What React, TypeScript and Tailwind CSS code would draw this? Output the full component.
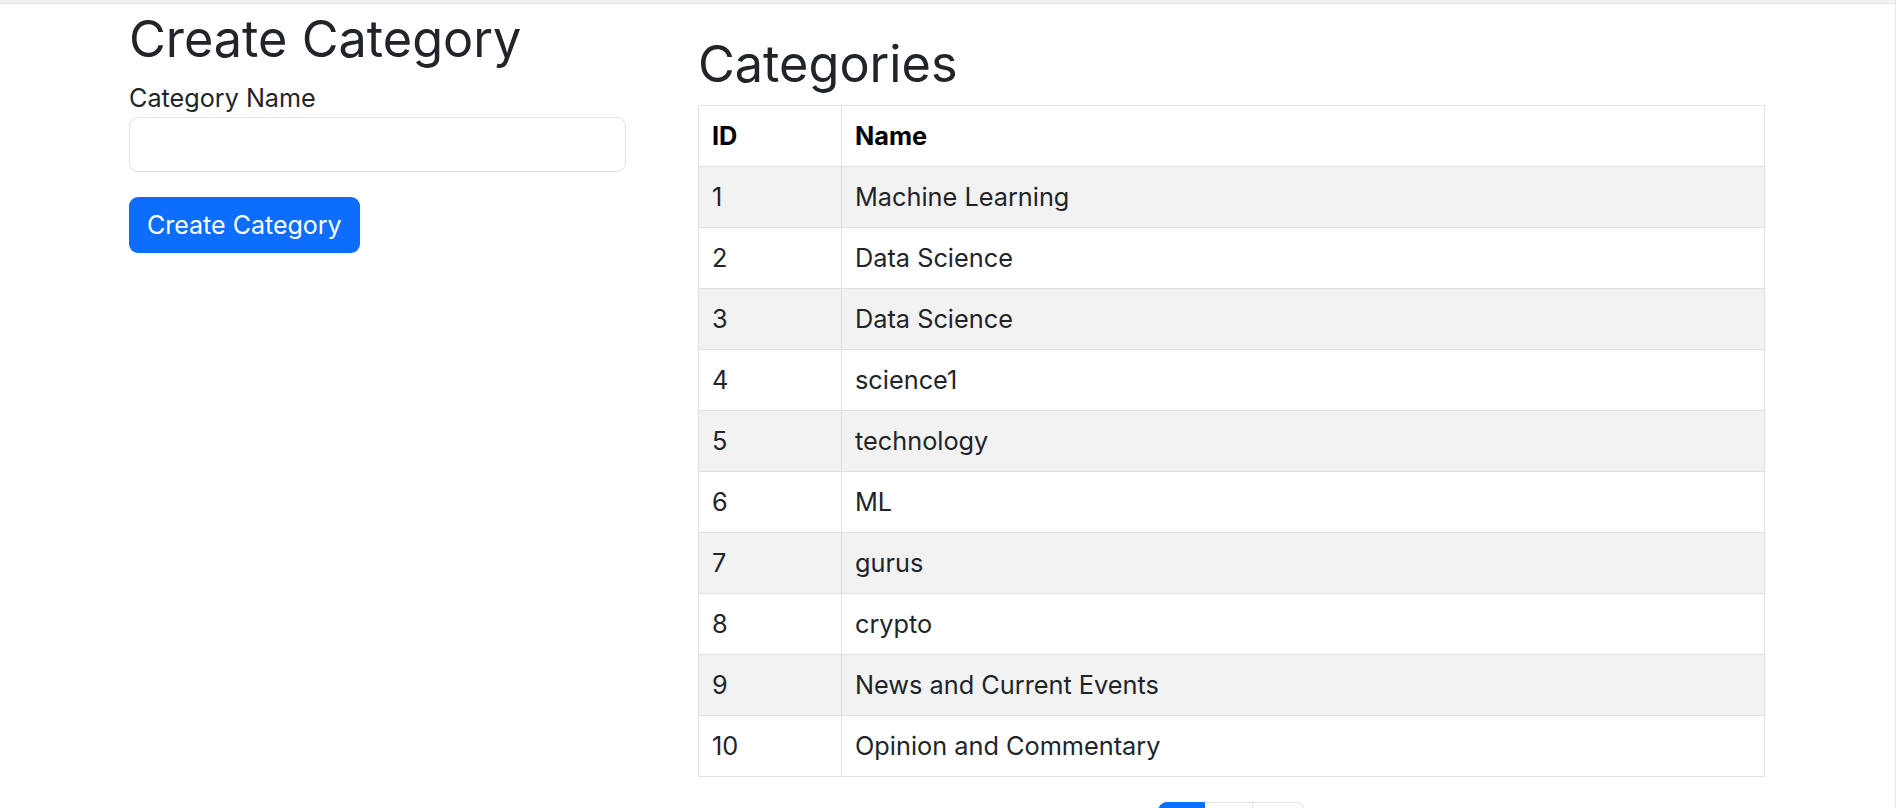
import React from "react";

const ROWS: [number, string][] = [
  [1, "Machine Learning"],
  [2, "Data Science"],
  [3, "Data Science"],
  [4, "science1"],
  [5, "technology"],
  [6, "ML"],
  [7, "gurus"],
  [8, "crypto"],
  [9, "News and Current Events"],
  [10, "Opinion and Commentary"],
];

export default function App() {
  return (
    <div
      className="relative w-[1896px] h-[808px] overflow-hidden bg-white border-r border-[#e6e6e6] text-[#212529]"
      style={{ fontFamily: '"Inter", "Liberation Sans", sans-serif' }}
    >
      <div className="h-[4px] bg-[#f1f2f4] border-b border-[#e2e3e7]" />
      <div className="flex">
        <div className="ml-[129px] w-[497px] pt-[5px]">
          <h1 className="text-[50.4px] font-normal leading-[60px] m-0">Create Category</h1>
          <label className="block mt-[11px] text-[25.2px] leading-[36px]">Category Name</label>
          <input className="block w-full h-[55px] mt-[1px] border border-[#dee2e6] rounded-[9px] px-[18px] text-[25px] outline-none bg-white" />
          <button className="mt-[25px] h-[56px] px-[18px] rounded-[9px] bg-[#0d6efd] text-white text-[25px] leading-[36px]">
            Create Category
          </button>
        </div>
        <div className="ml-[72px] w-[1067px] pt-[30px]">
          <h1 className="text-[50.4px] font-normal leading-[60px] m-0 mb-[11px]">Categories</h1>
          <table className="w-full border-collapse border border-[#dee2e6] text-[25.3px]">
            <thead>
              <tr className="h-[61px]">
                <th className="w-[143px] border border-[#dee2e6] px-[13px] text-left font-bold text-black">ID</th>
                <th className="border border-[#dee2e6] px-[13px] text-left font-bold text-black">Name</th>
              </tr>
            </thead>
            <tbody>
              {ROWS.map(([id, name], i) => (
                <tr key={id} className={i % 2 === 0 ? "h-[61px] bg-[#f2f2f2]" : "h-[61px] bg-white"}>
                  <td className="border border-[#dee2e6] px-[13px]">{id}</td>
                  <td className="border border-[#dee2e6] px-[13px]">{name}</td>
                </tr>
              ))}
            </tbody>
          </table>
          <div className="flex justify-center mt-[25px]">
            <div className="flex text-[24px] leading-[36px]">
              <span className="w-[47px] py-[9px] text-center bg-[#0d6efd] border border-[#0d6efd] text-white rounded-l-[9px]">1</span>
              <span className="w-[48px] py-[9px] text-center border border-l-0 border-[#dee2e6] text-[#0d6efd]">2</span>
              <span className="w-[52px] py-[9px] text-center border border-l-0 border-[#dee2e6] text-[#0d6efd] rounded-r-[9px]">»</span>
            </div>
          </div>
        </div>
      </div>
    </div>
  );
}
